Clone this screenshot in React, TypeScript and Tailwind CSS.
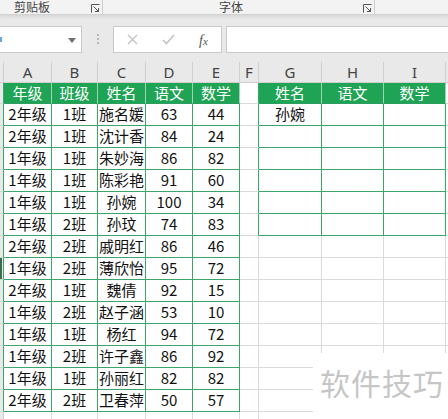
const rows = [
  ["2年级", "1班", "施名媛", "63", "44"],
  ["2年级", "1班", "沈计香", "84", "24"],
  ["1年级", "1班", "朱妙海", "86", "82"],
  ["1年级", "1班", "陈彩艳", "91", "60"],
  ["1年级", "1班", "孙婉", "100", "34"],
  ["1年级", "2班", "孙玟", "74", "83"],
  ["2年级", "2班", "戚明红", "86", "46"],
  ["1年级", "2班", "薄欣怡", "95", "72"],
  ["2年级", "1班", "魏倩", "92", "15"],
  ["1年级", "2班", "赵子涵", "53", "10"],
  ["1年级", "1班", "杨红", "94", "72"],
  ["1年级", "2班", "许子鑫", "86", "92"],
  ["1年级", "1班", "孙丽红", "82", "82"],
  ["2年级", "2班", "卫春萍", "50", "57"],
];

const leftW = ["w-[48px]", "w-[46px]", "w-[48px]", "w-[47px]", "w-[47px]"];
const rightW = ["w-[63px]", "w-[62px]", "w-[62px]"];
const letters = ["A", "B", "C", "D", "E", "F", "G", "H", "I"];
const letterW = [...leftW, "w-[19px]", ...rightW];

type Kind = "head" | "green" | "plain";

function Cell({ w, text, kind }: { w: string; text?: string; kind: Kind }) {
  const cls =
    kind === "head"
      ? "bg-[#1fa355] text-white border-r-[#9ad6b2] border-b-[#2a9d5f]"
      : kind === "green"
        ? "bg-white text-[#111] border-r-[#3ba56c] border-b-[#3ba56c]"
        : "bg-white text-[#111] border-r-[#dadada] border-b-[#dadada]";
  return (
    <div
      className={`${w} shrink-0 h-full border-r border-b flex items-center justify-center overflow-hidden whitespace-nowrap ${cls}`}
    >
      {text}
    </div>
  );
}

function Row({
  h,
  left,
  right,
  leftKind,
  rightKind,
  mark,
}: {
  h: string;
  left: string[];
  right: string[];
  leftKind: Kind;
  rightKind: Kind;
  mark?: boolean;
}) {
  return (
    <div className={`flex ${h}`}>
      <div
        className={`relative w-[4px] shrink-0 h-full bg-[#e9e9e9] border-r border-b border-b-[#d4d4d4] ${
          leftKind === "plain" ? "border-r-[#cfcfcf]" : "border-r-[#3ba56c]"
        }`}
      >
        {mark && <div className="absolute left-0 top-0 w-[2px] h-full bg-[#3f6b50]" />}
      </div>
      {leftW.map((w, i) => (
        <Cell key={i} w={w} text={left[i]} kind={leftKind} />
      ))}
      <div
        className={`w-[19px] shrink-0 h-full bg-white border-r border-b border-b-[#dadada] ${
          rightKind === "plain" ? "border-r-[#dadada]" : "border-r-[#3ba56c]"
        }`}
      />
      {rightW.map((w, i) => (
        <Cell key={i} w={w} text={right[i]} kind={rightKind} />
      ))}
      <div className="flex-1 h-full bg-white border-b border-b-[#dadada]" />
    </div>
  );
}

function Launcher() {
  return (
    <svg width="9" height="9" viewBox="0 0 9 9" className="text-[#555]">
      <path d="M0.5 8.5V0.5H8.5" fill="none" stroke="currentColor" strokeWidth="1" />
      <path d="M2.5 2.5L7.5 7.5M4 7.5H7.5V4" fill="none" stroke="currentColor" strokeWidth="1" />
    </svg>
  );
}

export default function App() {
  return (
    <div
      className="relative w-[448px] h-[419px] overflow-hidden bg-[#e9e9e9] text-[15px]"
      style={{ fontFamily: '"Noto Sans CJK SC", "Noto Sans", sans-serif' }}
    >
      {/* ribbon group labels */}
      <div className="relative h-[15px] bg-[#f3f3f3] border-b border-[#d2d2d2] shadow-[0_2px_3px_rgba(0,0,0,0.08)] flex text-[12px] text-[#444] leading-[14px]">
        <div className="w-[103px] shrink-0 relative border-r border-[#cfcfcf] h-[14px]">
          <span className="absolute left-[14px] top-0">剪贴板</span>
          <span className="absolute left-[91px] top-[4px]">
            <Launcher />
          </span>
        </div>
        <div className="w-[272px] shrink-0 relative border-r border-[#cfcfcf] h-[14px]">
          <span className="absolute left-[116px] top-0">字体</span>
          <span className="absolute left-[260px] top-[4px]">
            <Launcher />
          </span>
        </div>
      </div>

      {/* formula bar */}
      <div className="flex items-center h-[47px] pt-[1px]">
        <div className="relative w-[82px] h-[27px] bg-white border border-[#c9c9c9] border-l-0 shrink-0">
          <div className="absolute left-0 top-[10px] w-[2px] h-[5px] bg-[#6aa5d8]" />
          <svg width="8" height="5" viewBox="0 0 8 5" className="absolute left-[68px] top-[11px]">
            <path d="M0 0H8L4 5Z" fill="#707070" />
          </svg>
        </div>
        <div className="w-[31px] shrink-0 flex flex-col items-center gap-[2px]">
          <div className="w-[2px] h-[2px] bg-[#b8b8b8]" />
          <div className="w-[2px] h-[2px] bg-[#b8b8b8]" />
          <div className="w-[2px] h-[2px] bg-[#b8b8b8]" />
        </div>
        <div className="relative w-[109px] h-[27px] bg-white border border-[#c9c9c9] shrink-0">
          <svg width="11" height="11" viewBox="0 0 11 11" className="absolute left-[13px] top-[7px]">
            <path d="M1 1L10 10M10 1L1 10" stroke="#c4c4c4" strokeWidth="1.4" />
          </svg>
          <svg width="13" height="11" viewBox="0 0 13 11" className="absolute left-[48px] top-[7px]">
            <path d="M1 6L4.5 9.5L12 1" fill="none" stroke="#c4c4c4" strokeWidth="1.6" />
          </svg>
          <span
            className="absolute left-[85px] top-[3px] italic text-[14px] text-[#555]"
            style={{ fontFamily: '"Liberation Serif", serif' }}
          >
            f<span className="text-[11px]">x</span>
          </span>
        </div>
        <div className="ml-[4px] flex-1 h-[27px] bg-white border border-[#c9c9c9] border-r-0" />
      </div>

      {/* column letters */}
      <div className="flex h-[21px] text-[#444]" style={{ fontFamily: '"Noto Sans", sans-serif' }}>
        <div className="w-[4px] shrink-0 h-full border-r border-b border-[#cfcfcf]" />
        {letters.map((l, i) => (
          <div
            key={l}
            className={`${letterW[i]} shrink-0 h-full border-r border-b border-[#cfcfcf] flex items-center justify-center text-[15px] leading-none`}
          >
            {l}
          </div>
        ))}
        <div className="flex-1 h-full border-b border-[#cfcfcf]" />
      </div>

      {/* header row */}
      <Row
        h="h-[21px]"
        left={["年级", "班级", "姓名", "语文", "数学"]}
        right={["姓名", "语文", "数学"]}
        leftKind="head"
        rightKind="head"
      />
      {rows.map((r, i) => (
        <Row
          key={i}
          h="h-[22px]"
          left={r}
          right={i === 0 ? ["孙婉"] : []}
          leftKind="green"
          rightKind={i < 6 ? "green" : "plain"}
          mark={i === 7}
        />
      ))}
      <Row h="h-[22px]" left={[]} right={[]} leftKind="plain" rightKind="plain" />

      {/* watermark */}
      <div className="absolute left-[313px] top-[353px] w-[135px] h-[66px] bg-white flex items-start pt-[12px] pl-[7px]">
        <span className="text-[30px] leading-[34px] text-[#c6c6c6] tracking-[1px]">软件技巧</span>
      </div>
    </div>
  );
}
